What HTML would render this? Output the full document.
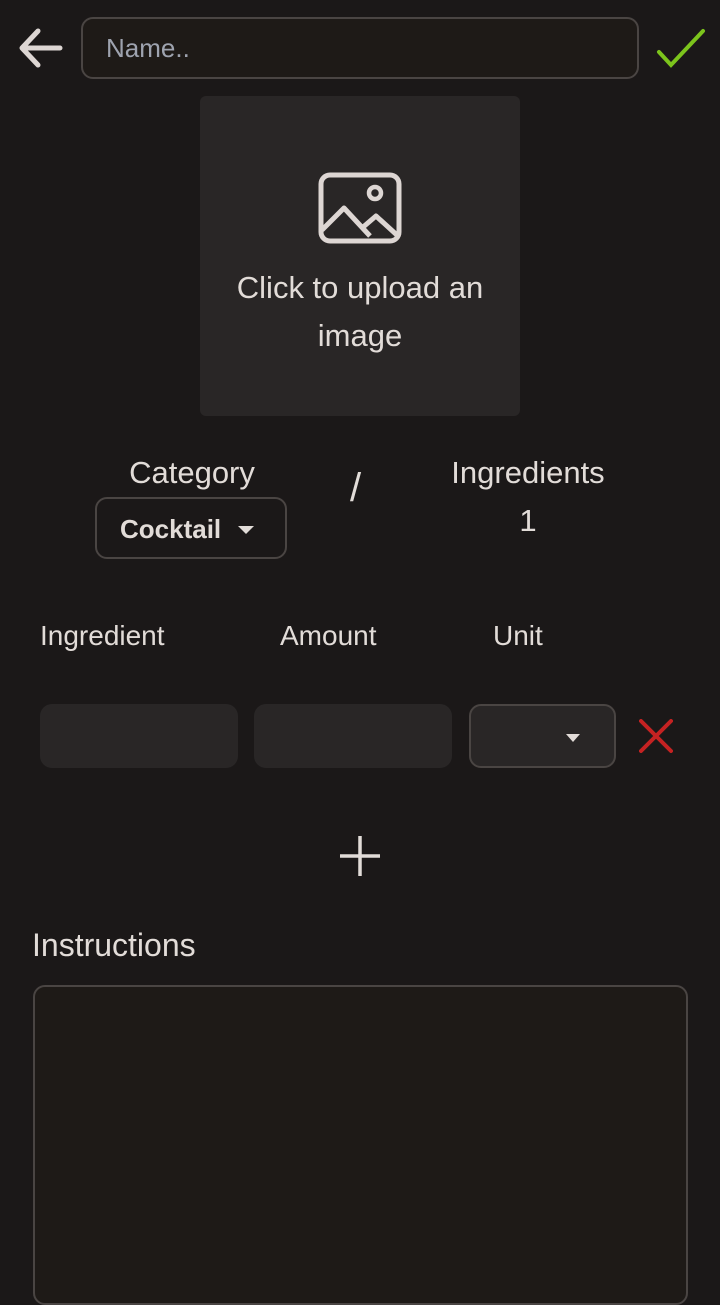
<!DOCTYPE html>
<html><head><style>
*{margin:0;padding:0;box-sizing:border-box}
body{width:720px;height:1280px;background:#1b1818;font-family:"Liberation Sans",sans-serif;color:#e2dcd8;position:relative;overflow:hidden}
.a{position:absolute}
.t{position:absolute;font-size:31px;color:#e2dcd8;white-space:nowrap}
</style></head><body>
<svg class="a" style="left:16px;top:26px" width="48" height="44" viewBox="0 0 48 44"><path d="M44 22H6M22 5L6 22L22 39" stroke="#ddd6d3" stroke-width="5" fill="none" stroke-linecap="round" stroke-linejoin="round"/></svg>
<div class="a" style="left:81px;top:17px;width:558px;height:62px;border:2px solid #4a4543;border-radius:12px;background:#1e1a17"></div>
<div class="t" style="left:106px;top:33px;color:#9ea3af;font-size:26px">Name..</div>
<svg class="a" style="left:654px;top:28px" width="52" height="40" viewBox="0 0 52 40"><path d="M5 24L17 37L49 3" stroke="#7cc41c" stroke-width="4" fill="none" stroke-linecap="round"/></svg>
<div class="a" style="left:200px;top:96px;width:320px;height:320px;background:#292626;border-radius:6px"></div>
<svg class="a" style="left:318px;top:172px" width="84" height="72" viewBox="0 0 84 72"><rect x="3" y="3" width="78" height="66" rx="9" stroke="#ddd6d3" stroke-width="5" fill="none"/><circle cx="57" cy="21" r="6" stroke="#ddd6d3" stroke-width="4.5" fill="none"/><path d="M4 58L26 36L52 64M44 56L58 44L80 64" stroke="#ddd6d3" stroke-width="5" fill="none" stroke-linejoin="round"/></svg>
<div class="t" style="left:200px;width:320px;text-align:center;top:264px;line-height:48px;font-size:31px">Click to upload an<br>image</div>
<div class="t" style="left:92px;width:200px;text-align:center;top:455px">Category</div>
<div class="a" style="left:95px;top:497px;width:192px;height:62px;border:2px solid #4a4543;border-radius:12px"></div>
<div class="t" style="left:120px;top:514px;font-weight:bold;font-size:26px">Cocktail</div>
<div class="a" style="left:238px;top:526px;border-left:8px solid transparent;border-right:8px solid transparent;border-top:8px solid #e2dcd8"></div>
<div class="t" style="left:350px;top:466px;font-size:40px">/</div>
<div class="t" style="left:428px;width:200px;text-align:center;top:455px">Ingredients</div>
<div class="t" style="left:428px;width:200px;text-align:center;top:503px">1</div>
<div class="t" style="left:40px;top:620px;font-size:28px">Ingredient</div>
<div class="t" style="left:280px;top:620px;font-size:28px">Amount</div>
<div class="t" style="left:493px;top:620px;font-size:28px">Unit</div>
<div class="a" style="left:40px;top:704px;width:198px;height:64px;background:#292626;border-radius:12px"></div>
<div class="a" style="left:254px;top:704px;width:198px;height:64px;background:#292626;border-radius:12px"></div>
<div class="a" style="left:469px;top:704px;width:147px;height:64px;background:#292626;border:2px solid #4a4543;border-radius:12px"></div>
<div class="a" style="left:566px;top:734px;border-left:7px solid transparent;border-right:7px solid transparent;border-top:8px solid #e2dcd8"></div>
<svg class="a" style="left:639px;top:719px" width="34" height="34" viewBox="0 0 34 34"><path d="M2 2L32 32M32 2L2 32" stroke="#c52222" stroke-width="4" stroke-linecap="round"/></svg>
<svg class="a" style="left:340px;top:836px" width="40" height="40" viewBox="0 0 40 40"><path d="M20 0V40M0 20H40" stroke="#e2dcd8" stroke-width="3.5"/></svg>
<div class="t" style="left:32px;top:927px;font-size:32px">Instructions</div>
<div class="a" style="left:33px;top:985px;width:655px;height:320px;border:2px solid #4a4543;border-radius:12px;background:#1e1a17"></div>
</body></html>
